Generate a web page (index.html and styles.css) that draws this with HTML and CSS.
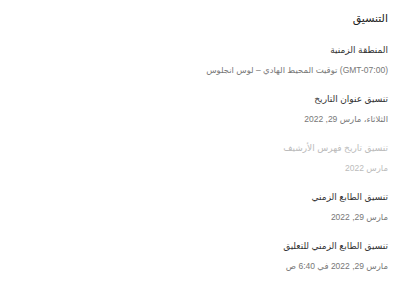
FILE: index.html
```html
<!DOCTYPE html>
<html lang="ar" dir="rtl">
<head>
    <link rel="stylesheet" href="styles.css">
</head>
<body>
    <div class="settings-panel">
        <h2 class="panel-title">التنسيق</h2>

        <div class="setting">
            <div class="setting-label">المنطقة الزمنية</div>
            <div class="setting-value">(GMT-07:00) توقيت المحيط الهادي – لوس انجلوس</div>
        </div>

        <div class="setting">
            <div class="setting-label">تنسيق عنوان التاريخ</div>
            <div class="setting-value">الثلاثاء، مارس 29, 2022</div>
        </div>

        <div class="setting disabled">
            <div class="setting-label">تنسيق تاريخ فهرس الأرشيف</div>
            <div class="setting-value">مارس 2022</div>
        </div>

        <div class="setting">
            <div class="setting-label">تنسيق الطابع الزمني</div>
            <div class="setting-value">مارس 29, 2022</div>
        </div>

        <div class="setting">
            <div class="setting-label">تنسيق الطابع الزمني للتعليق</div>
            <div class="setting-value">مارس 29, 2022 في 6:40 ص</div>
        </div>
    </div>
</body>
</html>
```

FILE: styles.css
```css
body {
    margin: 0;
    padding: 0;
    background: #fff;
    font-family: "Liberation Sans", "DejaVu Sans", "Noto Sans", sans-serif;
    color: #222;
}

.settings-panel {
    padding: 10px 12px 0 12px;
}

.panel-title {
    margin: 0 0 17px 0;
    font-size: 11px;
    font-weight: normal;
    line-height: 16px;
    color: #222;
}

.setting {
    margin-bottom: 15px;
}

.setting-label {
    font-size: 9px;
    line-height: 14px;
    color: #333;
    margin-bottom: 6px;
}

.setting-value {
    font-size: 8.5px;
    line-height: 14px;
    color: #777;
}

.setting.disabled .setting-label,
.setting.disabled .setting-value {
    color: #bbb;
}
```
